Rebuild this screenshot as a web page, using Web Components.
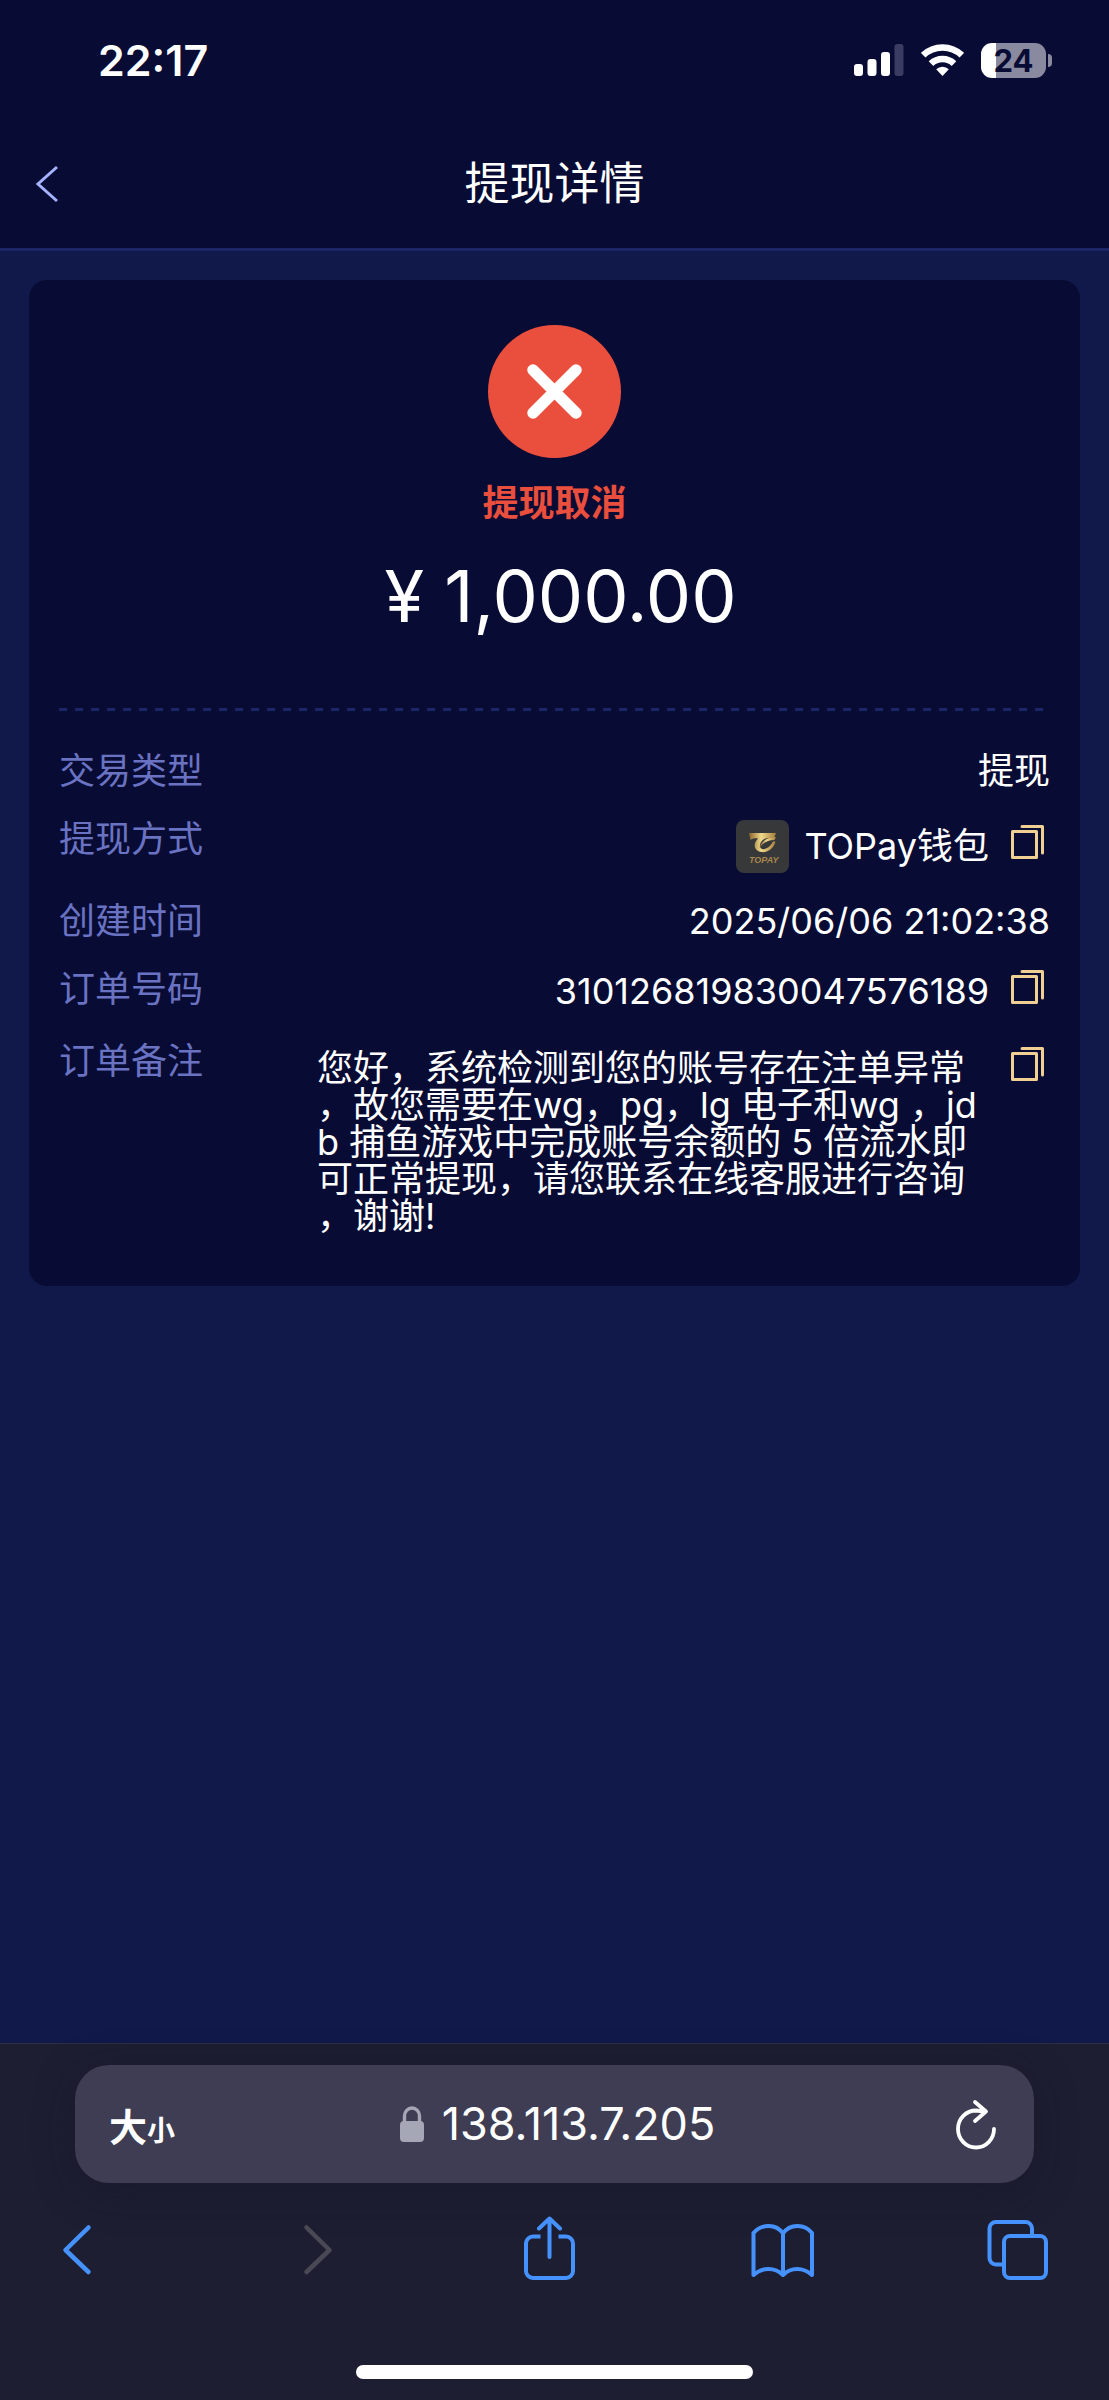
<!DOCTYPE html>
<html lang="zh-CN">
<head>
<meta charset="utf-8">
<meta name="viewport" content="width=device-width, initial-scale=1">
<title>提现详情</title>
<style>
  :root {
    --ink: #080b34;
    --page: #11194b;
    --line: #1c2666;
    --label: #6a73c2;
    --gold: #f0cf92;
    --blue: #4592ff;
    --danger: #ea4e3d;
  }
  body {
    margin: 0;
    background: var(--page);
    color: #fff;
    font-family: Inter, "Noto Sans CJK SC", sans-serif;
    font-size: 36px;
  }
</style>
</head>
<body>
<withdraw-screen></withdraw-screen>

<script>
const define = (name, html) => {
  const template = document.createElement('template');
  template.innerHTML = `<style>
    * { box-sizing: border-box; }
    svg { display: block; }
    button { appearance: none; border: 0; background: none; margin: 0; padding: 0; color: inherit; font: inherit; cursor: pointer; }
  </style>` + html;
  customElements.define(name, class extends HTMLElement {
    constructor() {
      super();
      this.attachShadow({ mode: 'open' }).append(template.content.cloneNode(true));
    }
  });
};

define('status-bar', `
  <style>
    :host { display: flex; align-items: center; justify-content: space-between; height: 120px; padding: 0 57px 0 98px; background: var(--ink); }
    time { font-size: 43px; font-weight: 600; line-height: 50px; }
    .signals { display: flex; align-items: center; gap: 17px; }
    .battery { display: flex; align-items: center; gap: 2px; }
    .cell { width: 65px; height: 35px; border-radius: 11px; background: linear-gradient(90deg, #fff 15px, #89899f 15px); color: var(--ink); font-size: 31px; font-weight: 700; line-height: 35px; text-align: center; }
    .nub { width: 4px; height: 13px; border-radius: 0 6px 6px 0; background: #89899f; }
  </style>
  <time>22:17</time>
  <div class="signals">
    <svg width="50" height="32" viewBox="0 0 50 32" fill="#fff" aria-hidden="true">
      <rect x="0" y="20" width="9" height="12" rx="3"/><rect x="13.5" y="15" width="9" height="17" rx="3"/>
      <rect x="27" y="8" width="9" height="24" rx="3"/><rect x="40.5" y="0" width="9" height="32" rx="3" fill="#3b3c61"/>
    </svg>
    <svg width="43" height="32" viewBox="0 0 43 32" fill="none" stroke="#fff" stroke-width="6.6" aria-hidden="true">
      <path d="M2.2 11.2A28 28 0 0 1 40.8 11.2"/><path d="M10 19.6A16.6 16.6 0 0 1 33 19.6"/>
      <path d="M21.5 32L15.2 25.2A9 9 0 0 1 27.8 25.2Z" fill="#fff" stroke="none"/>
    </svg>
    <div class="battery"><div class="cell">24</div><div class="nub"></div></div>
  </div>`);

define('page-header', `
  <style>
    :host { display: grid; grid-template-columns: 96px 1fr 96px; align-items: center; height: 131px; border-bottom: 3px solid var(--line); background: var(--ink); }
    button { height: 96px; padding-left: 35px; }
    h1 { margin: 0; font-size: 45px; font-weight: 400; line-height: 64px; text-align: center; }
  </style>
  <button type="button" aria-label="返回"><svg width="24" height="38" viewBox="0 0 24 38" fill="none" stroke="#a5b3ff" stroke-width="3"><path d="M22 2L3 19L22 36"/></svg></button>
  <h1><slot></slot></h1>`);

define('withdraw-status', `
  <style>
    :host { display: flex; flex-direction: column; align-items: center; padding: 45px 0 71px; background: repeating-linear-gradient(90deg, var(--line) 0 8px, transparent 8px 16px) bottom / 100% 3px no-repeat; }
    .state { margin-top: 18px; color: var(--danger); font-size: 36px; font-weight: 700; line-height: 54px; }
    .amount { margin-top: 22px; padding-left: 12px; font-size: 72px; line-height: 88px; }
  </style>
  <svg width="133" height="133" viewBox="0 0 133 133" aria-hidden="true"><circle cx="66.5" cy="66.5" r="66.5" fill="#ea4e3d"/><path d="M45 45L88 88M88 45L45 88" stroke="#fff" stroke-width="11.5" stroke-linecap="round"/></svg>
  <div class="state"><slot name="state"></slot></div>
  <div class="amount"><slot name="amount"></slot></div>`);

define('copy-button', `
  <style>
    :host { display: block; margin-left: 22px; padding-right: 6px; }
    button { display: block; color: var(--gold); line-height: 34px; }
    svg { display: inline-block; vertical-align: baseline; }
  </style>
  <button type="button" aria-label="复制"><svg width="33" height="34" viewBox="0 0 33 34" fill="none" stroke="currentColor" stroke-width="3" stroke-linejoin="round" stroke-linecap="round"><rect x="1.5" y="6.5" width="24" height="26"/><path d="M11 1.5H31.5V28"/></svg></button>`);

define('topay-logo', `
  <style>:host { display: block; align-self: center; margin-right: 15px; }</style>
  <svg width="53" height="53" viewBox="0 0 53 53" role="img" aria-label="TOPAY">
    <defs><linearGradient id="g" x1="0" x2="1" y1="0" y2="0"><stop offset="0" stop-color="#8a6228"/><stop offset=".45" stop-color="#f1d98c"/><stop offset="1" stop-color="#a57c39"/></linearGradient></defs>
    <rect width="53" height="53" rx="8" fill="#363839"/>
    <path fill="url(#g)" d="M13 13H40L38 18C31 17 26 19 24.500 23C22.500 28 26 30.500 30 28.500C33.500 27 35.500 24 37 21.500H39.500C38 28 32 33 25.500 32C18 31 16.500 24 22 18.500C19 18 16.500 18.500 14.500 20Z"/>
    <path fill="url(#g)" d="M40 17C32 17 25 21 23.500 28C27 22.500 32 20 38.500 20Z"/>
    <text x="13" y="43" font-family="'Liberation Sans Narrow', 'Liberation Sans', sans-serif" font-size="9" font-weight="700" font-style="italic" fill="#a8864c">TOPAY</text>
  </svg>`);

define('detail-row', `
  <style>
    :host { display: flex; align-items: flex-start; justify-content: space-between; line-height: 50px; }
    .label { flex: none; color: var(--label); }
    .value { display: flex; align-items: baseline; justify-content: flex-end; line-height: var(--value-line, 50px); }
  </style>
  <div class="label"><slot name="label"></slot></div>
  <div class="value"><slot></slot></div>`);

define('remark-text', `
  <style>:host { display: block; width: 672px; padding-top: 14px; line-height: 37px; white-space: nowrap; }</style>
  <slot></slot>`);

define('detail-card', `
  <style>
    :host { display: block; margin: 29px 29px 0; padding: 0 30px 51px; border-radius: 18px; background: var(--ink); }
    .rows { display: flex; flex-direction: column; gap: 18px; padding-top: 35px; }
    .copy { --value-line: 54px; }
    .wallet { --value-line: 64px; }
  </style>
  <withdraw-status><span slot="state">提现取消</span><span slot="amount">¥ 1,000.00</span></withdraw-status>
  <div class="rows">
    <detail-row><span slot="label">交易类型</span><span>提现</span></detail-row>
    <detail-row class="wallet"><span slot="label">提现方式</span><topay-logo></topay-logo><span>TOPay钱包</span><copy-button></copy-button></detail-row>
    <detail-row><span slot="label">创建时间</span><span>2025/06/06 21:02:38</span></detail-row>
    <detail-row class="copy"><span slot="label">订单号码</span><span>310126819830047576189</span><copy-button></copy-button></detail-row>
    <detail-row><span slot="label">订单备注</span><remark-text>您好，系统检测到您的账号存在注单异常<br>，故您需要在wg，pg，lg 电子和wg ，jd<br>b 捕鱼游戏中完成账号余额的 5 倍流水即<br>可正常提现，请您联系在线客服进行咨询<br>，谢谢!</remark-text><copy-button></copy-button></detail-row>
  </div>`);

define('browser-bar', `
  <style>
    :host { display: block; padding: 21px 0; border-top: 1px solid #2e2e40; background: #1e1e32; }
    .address { display: grid; grid-template-columns: 126px 1fr 120px; align-items: center; height: 118px; margin: 0 75px; padding: 0 34px; border-radius: 34px; background: #3e3d53; box-shadow: 0 8px 40px #14142666; }
    .size { display: flex; align-items: baseline; font-size: 38px; font-weight: 700; }
    .size small { font-size: 28px; }
    .url { display: flex; align-items: center; justify-content: center; gap: 18px; font-size: 45px; line-height: 56px; }
    .reload { justify-self: end; }
    nav { display: flex; justify-content: space-between; margin-top: 33px; padding: 0 60px 0 45px; color: var(--blue); }
    nav button:disabled { color: #494955; }
    .home { width: 397px; height: 14px; margin: 83px auto 0; border-radius: 7px; background: #fff; }
  </style>
  <div class="address">
    <button class="size" type="button" aria-label="页面设置"><span>大</span><small>小</small></button>
    <button class="url" type="button">
      <svg width="24" height="36" viewBox="0 0 24 36" aria-hidden="true"><rect y="15" width="24" height="21" rx="4" fill="#a5a6b6"/><path d="M4.500 16V10a7.500 8 0 0 1 15 0V16" fill="none" stroke="#a5a6b6" stroke-width="3.400"/></svg>
      <span>138.113.7.205</span>
    </button>
    <button class="reload" type="button" aria-label="重新载入"><svg width="48" height="56" viewBox="0 0 48 56" fill="none" stroke="#fff" stroke-width="3.800" stroke-linecap="round" stroke-linejoin="round"><path d="M42 33A18 18.500 0 1 1 24 14.500L32 15.500M23 6L34 15.500L23 25"/></svg></button>
  </div>
  <nav>
    <button type="button" aria-label="后退"><svg width="64" height="66" viewBox="0 0 64 66" fill="none" stroke="currentColor" stroke-width="4.500" stroke-linecap="round" stroke-linejoin="round"><path d="M43.500 11.500L20.500 34L43.500 56"/></svg></button>
    <button type="button" aria-label="前进" disabled><svg width="64" height="66" viewBox="0 0 64 66" fill="none" stroke="currentColor" stroke-width="4.500" stroke-linecap="round" stroke-linejoin="round"><path d="M26.500 11.500L49.500 34L26.500 56"/></svg></button>
    <button type="button" aria-label="分享"><svg width="64" height="66" viewBox="0 0 64 66" fill="none" stroke="currentColor" stroke-width="4" stroke-linecap="round" stroke-linejoin="round"><path stroke-linecap="butt" d="M25.500 20.500H18a7 7 0 0 0-7 7V55a7 7 0 0 0 7 7H51a7 7 0 0 0 7-7V27.500a7 7 0 0 0-7-7H43.500"/><path d="M34.500 41V2.500M24 12.500L34.500 2.500L45 12.500"/></svg></button>
    <button type="button" aria-label="书签"><svg width="64" height="66" viewBox="0 0 64 66" fill="none" stroke="currentColor" stroke-width="4" stroke-linecap="round" stroke-linejoin="round"><path d="M3.500 17C11 8 26 7 33 17.500C40 7 55 8 62 17V59C53 51 41 51 33 59C25 51 12 51 3.500 59ZM33 17.500V59"/></svg></button>
    <button type="button" aria-label="标签页"><svg width="64" height="66" viewBox="0 0 64 66" fill="none" stroke="currentColor" stroke-width="4"><rect x="19" y="20" width="42" height="42" rx="6"/><path d="M19 48.500H11a6.500 6.500 0 0 1-6.500-6.500V12.500a6.500 6.500 0 0 1 6.500-6.500H40.500a6.500 6.500 0 0 1 6.500 6.500V20"/></svg></button>
  </nav>
  <div class="home"></div>`);

define('withdraw-screen', `
  <style>
    :host { display: flex; flex-direction: column; min-height: 100vh; }
    main { flex: 1; }
  </style>
  <status-bar></status-bar>
  <page-header>提现详情</page-header>
  <main><detail-card></detail-card></main>
  <browser-bar></browser-bar>`);
</script>
</body>
</html>
